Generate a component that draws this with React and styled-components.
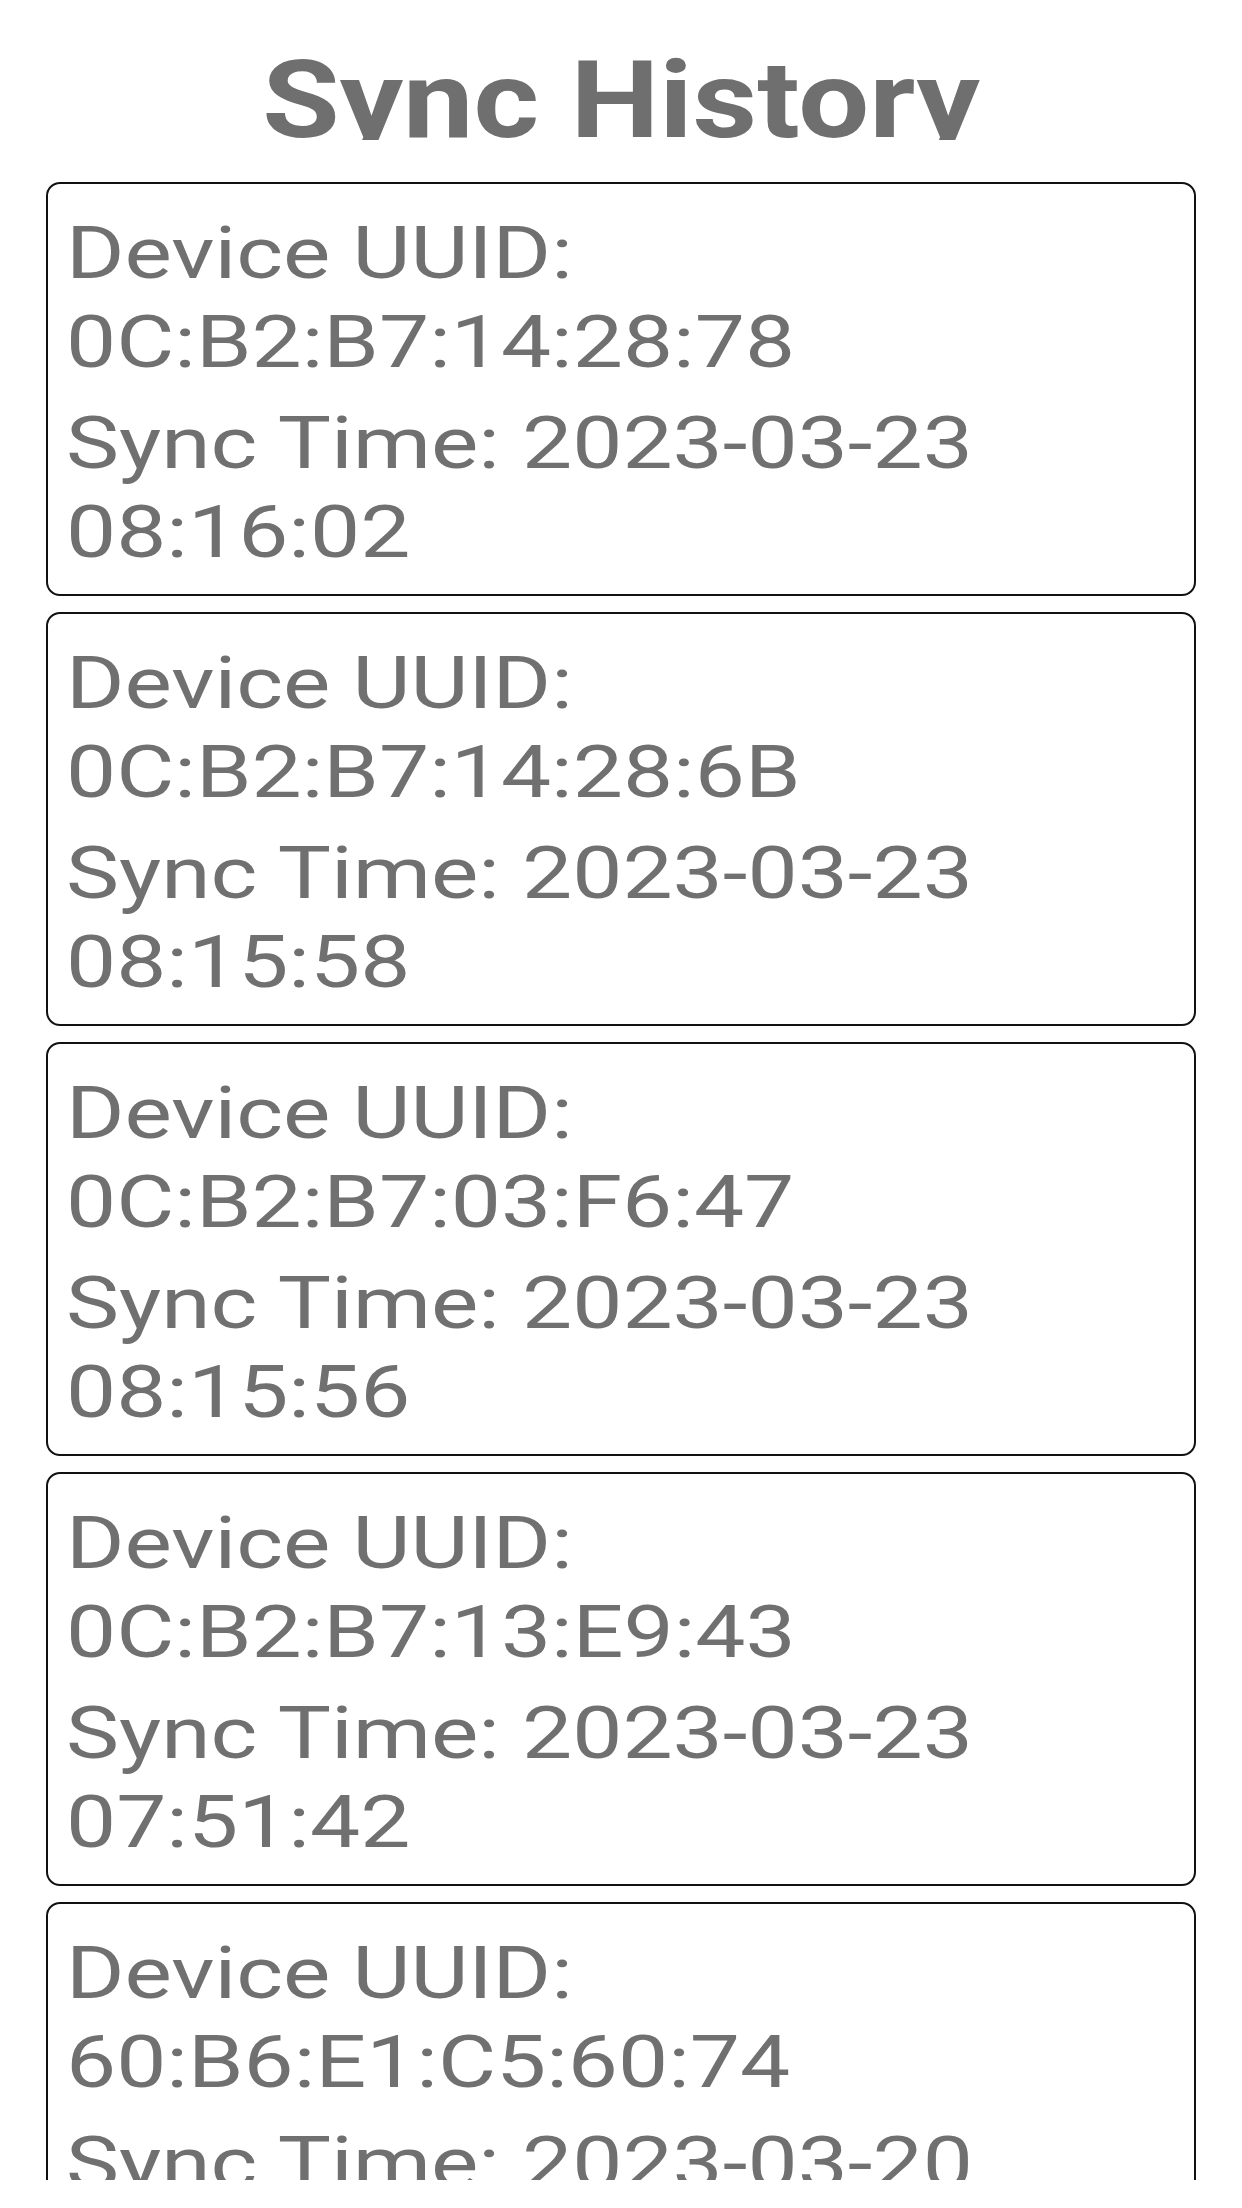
import React from "react";
import styled, { createGlobalStyle } from "styled-components";

const GlobalStyle = createGlobalStyle`
  html, body {
    margin: 0;
    padding: 0;
    background: #ffffff;
  }
  body {
    font-family: Roboto, "Noto Sans", Arial, sans-serif;
  }
  * {
    box-sizing: border-box;
  }
`;

const syncs = [
  { uuid: "0C:B2:B7:14:28:78", time: "2023-03-23 08:16:02" },
  { uuid: "0C:B2:B7:14:28:6B", time: "2023-03-23 08:15:58" },
  { uuid: "0C:B2:B7:03:F6:47", time: "2023-03-23 08:15:56" },
  { uuid: "0C:B2:B7:13:E9:43", time: "2023-03-23 07:51:42" },
  { uuid: "60:B6:E1:C5:60:74", time: "2023-03-20 16:04:11" },
];

export default function App() {
  return (
    <>
      <GlobalStyle />
      <Page>
        <Header>
          <Title>Sync History</Title>
        </Header>
        <List>
          {syncs.map((item) => (
            <SyncCard key={item.uuid}>
              <CardText>
                <Line>Device UUID: {item.uuid}</Line>
                <Line $gap>Sync Time: {item.time}</Line>
              </CardText>
            </SyncCard>
          ))}
        </List>
      </Page>
    </>
  );
}

const Page = styled.div`
  display: flex;
  flex-direction: column;
  width: 1242px;
  height: 2208px;
  background: #ffffff;
  overflow: hidden;
`;

const Header = styled.header`
  height: 140px;
  padding-top: 47px;
  overflow: hidden;
  flex-shrink: 0;
`;

const Title = styled.h1`
  margin: 0;
  font-family: Roboto, Arial, sans-serif;
  font-weight: 700;
  font-size: 107px;
  line-height: 107px;
  color: #6f6f6f;
  text-align: center;
  transform: scaleX(1.176);
`;

const List = styled.main`
  display: flex;
  flex-direction: column;
  gap: 16px;
  height: 2040px;
  padding: 42px 46px 0;
  overflow: hidden;
  flex-shrink: 0;
`;

const SyncCard = styled.section`
  flex-shrink: 0;
  border: 2px solid #111111;
  border-radius: 14px;
  padding: 25px 0 17px 18px;
  background: #ffffff;
  overflow: hidden;
`;

const CardText = styled.div`
  width: calc(100% / 1.24);
  transform: scaleX(1.24);
  transform-origin: left center;
`;

const Line = styled.p`
  margin: ${(p) => (p.$gap ? "12px 0 0" : "0")};
  font-size: 72px;
  line-height: 89px;
  font-weight: 400;
  color: #707070;
`;
